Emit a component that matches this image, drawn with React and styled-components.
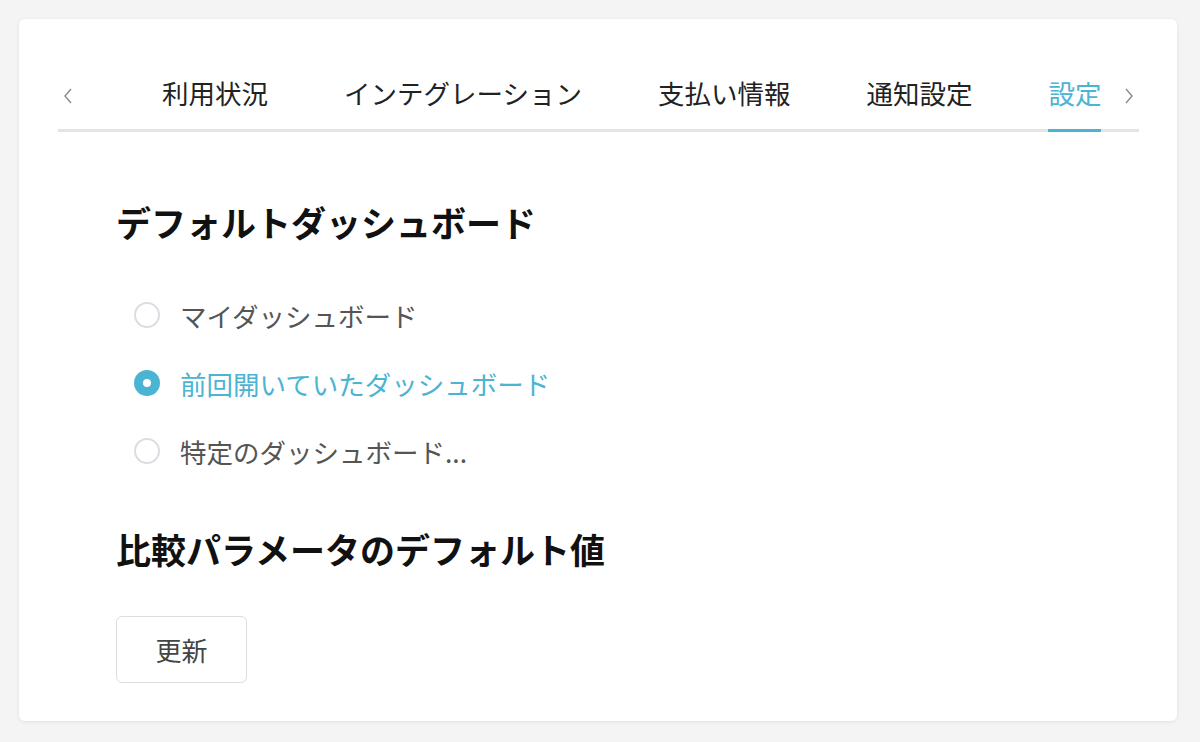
import React, { useState } from "react";
import styled, { createGlobalStyle } from "styled-components";

const GlobalStyle = createGlobalStyle`
  html, body {
    margin: 0;
    background: #f4f4f5;
    font-family: "Noto Sans CJK JP", "Noto Sans", sans-serif;
  }
`;

const Page = styled.div`
  padding: 19px 23px 19px 19px;
`;

const Card = styled.div`
  background: #fff;
  border-radius: 6px;
  box-shadow: 0 1px 4px rgba(0, 0, 0, 0.08);
  padding: 40px 38px 38px 39px;
`;

const TabBar = styled.div`
  display: flex;
  align-items: center;
  border-bottom: 3px solid #e3e3ea;
`;

const Arrow = styled.button`
  display: flex;
  align-items: center;
  justify-content: center;
  width: 20px;
  height: 36px;
  padding: 0;
  margin-top: 4px;
  border: none;
  background: none;
  color: #8a8a8f;
  cursor: pointer;
  margin-left: ${(p) => (p.$right ? "auto" : "0")};
`;

const TabList = styled.div`
  display: flex;
  gap: 76px;
  margin-left: 84px;
`;

const Tab = styled.div`
  font-size: 26.5px;
  line-height: 36px;
  padding: 16px 0 18px;
  margin-bottom: -3px;
  white-space: nowrap;
  cursor: pointer;
  color: ${(p) => (p.$active ? "#4bb4d3" : "#222")};
  border-bottom: 3px solid ${(p) => (p.$active ? "#4bb4d3" : "transparent")};
`;

const Content = styled.div`
  padding: 0 58px;
`;

const Title = styled.h2`
  margin: ${(p) => p.$mt}px 0 0;
  font-size: 35px;
  line-height: 48px;
  font-weight: 700;
  color: #111;
`;

const RadioList = styled.div`
  margin-top: 35px;
  padding-left: 18px;
`;

const RadioRow = styled.label`
  display: flex;
  align-items: center;
  gap: 20px;
  height: 68px;
  font-size: 26.5px;
  cursor: pointer;
  color: ${(p) => (p.$checked ? "#4bb4d3" : "#555")};
`;

const RadioCircle = styled.span`
  box-sizing: border-box;
  width: 26px;
  height: 26px;
  border-radius: 50%;
  flex-shrink: 0;
  display: flex;
  align-items: center;
  justify-content: center;
  border: ${(p) => (p.$checked ? "none" : "2px solid #dcdce3")};
  background: ${(p) => (p.$checked ? "#4bb4d3" : "#fff")};

  &::after {
    content: "";
    width: 8px;
    height: 8px;
    border-radius: 50%;
    background: #fff;
    display: ${(p) => (p.$checked ? "block" : "none")};
  }
`;

const Button = styled.button`
  margin-top: 43px;
  width: 131px;
  height: 67px;
  border: 1.5px solid #dcdce2;
  border-radius: 6px;
  background: #fff;
  font-family: inherit;
  font-size: 26px;
  color: #444;
  cursor: pointer;
`;

const Chevron = ({ dir }) => (
  <svg width="10" height="16" viewBox="0 0 10 16" fill="none">
    <polyline
      points={dir === "left" ? "8,1 2,8 8,15" : "2,1 8,8 2,15"}
      stroke="currentColor"
      strokeWidth="1.4"
    />
  </svg>
);

const tabs = ["利用状況", "インテグレーション", "支払い情報", "通知設定", "設定"];
const options = [
  "マイダッシュボード",
  "前回開いていたダッシュボード",
  "特定のダッシュボード...",
];

const App = () => {
  const [active, setActive] = useState(4);
  const [choice, setChoice] = useState(1);

  return (
    <Page>
      <GlobalStyle />
      <Card>
        <TabBar>
          <Arrow>
            <Chevron dir="left" />
          </Arrow>
          <TabList>
            {tabs.map((t, i) => (
              <Tab key={t} $active={i === active} onClick={() => setActive(i)}>
                {t}
              </Tab>
            ))}
          </TabList>
          <Arrow $right>
            <Chevron dir="right" />
          </Arrow>
        </TabBar>
        <Content>
          <Title $mt={66}>デフォルトダッシュボード</Title>
          <RadioList>
            {options.map((o, i) => (
              <RadioRow
                key={o}
                $checked={i === choice}
                onClick={() => setChoice(i)}
              >
                <RadioCircle $checked={i === choice} />
                {o}
              </RadioRow>
            ))}
          </RadioList>
          <Title $mt={40}>比較パラメータのデフォルト値</Title>
          <Button>更新</Button>
        </Content>
      </Card>
    </Page>
  );
};

export default App;
